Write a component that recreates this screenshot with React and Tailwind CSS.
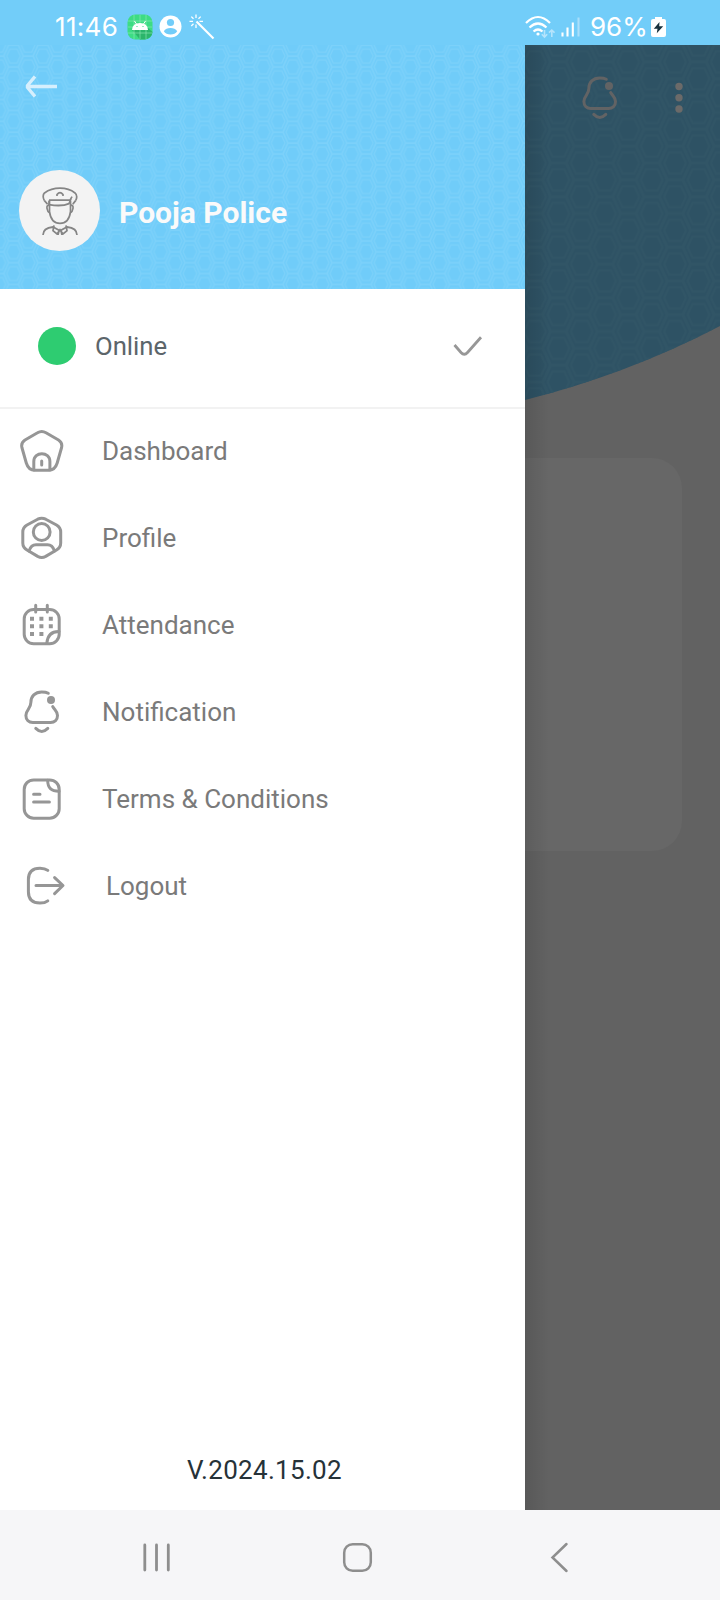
import React from "react";

const menuItems = [
  { label: "Dashboard", icon: HomeIcon },
  { label: "Profile", icon: ProfileIcon },
  { label: "Attendance", icon: CalendarIcon },
  { label: "Notification", icon: BellIcon },
  { label: "Terms & Conditions", icon: TermsIcon },
  { label: "Logout", icon: LogoutIcon, indent: true },
];

function Icon({ children, className = "text-[#969696]" }) {
  return (
    <svg
      className={`h-11 w-11 shrink-0 ${className}`}
      viewBox="0 0 44 44"
      fill="none"
      stroke="currentColor"
      strokeWidth="3"
      strokeLinecap="round"
      strokeLinejoin="round"
    >
      {children}
    </svg>
  );
}

function HomeIcon() {
  return (
    <Icon>
      <path d="M17.500 3.800 5 11Q.8 13.800 1.900 18.500L6.300 34Q8.500 41.300 15 41.300H28.500Q35 41.300 37.200 34L41.600 18.500Q42.700 13.800 38.500 11L26 3.800Q21.700 1.200 17.500 3.800Z" />
      <path d="M13.800 41V32.500C13.800 22.200 29.900 22.200 29.900 32.500V41" />
      <path d="M21.700 32V36" />
    </Icon>
  );
}

function ProfileIcon() {
  return (
    <Icon>
      <path d="M17.700 3.200 7 9Q2.800 11.500 2.800 16V27Q2.800 31.500 7 34L17.700 40.400Q21.700 42.500 25.700 40.400L36.500 34Q40.700 31.500 40.700 27V16Q40.700 11.500 36.500 9L25.700 3.200Q21.700 1.200 17.700 3.200Z" />
      <circle cx="21.7" cy="16" r="8.4" />
      <path d="M9 35Q11 28.8 16 28.8H27.5Q32.5 28.8 34.5 35" />
    </Icon>
  );
}

function CalendarIcon() {
  return (
    <Icon>
      <rect x="4.2" y="6.5" width="35" height="34.3" rx="9.500" />
      <path d="M15.7 2.2V9M27.3 2.2V9" />
      <path d="M39 28.5Q27.8 28.3 26.8 40.4" />
      <g fill="currentColor" stroke="none">
        <path d="M10 13.7h4v4h-4zM19.4 13.7h4v4h-4zM28.8 13.7h4v4h-4z" />
        <path d="M10 21.3h4v4h-4zM19.4 21.3h4v4h-4zM28.8 21.3h4v4h-4z" />
        <path d="M10 29h4v4h-4zM19.4 29h4v4h-4z" />
      </g>
    </Icon>
  );
}

function BellIcon({ className }) {
  return (
    <Icon className={className}>
      <path d="M28.3 3.3Q26 2 21.7 2C15 2 10.9 6.4 10.9 12.3C10.9 19 5.9 19.5 5.9 25.5C5.9 30 8.8 32.4 12.8 32.4H30.6C34.6 32.4 37.5 30 37.5 25.5C37.5 21.3 34.6 20 32.7 16.6" />
      <path d="M15.8 38.4Q21.7 44.5 27.8 38.4" />
      <circle cx="31" cy="10" r="4" fill="currentColor" stroke="none" />
    </Icon>
  );
}

function TermsIcon() {
  return (
    <Icon>
      <rect x="4.2" y="2.9" width="35" height="38.3" rx="9.500" />
      <path d="M27.7 3.2C27.7 10.8 31 14.2 39 14.2" />
      <path d="M13.6 17.2H20M13.6 25H29.4" />
    </Icon>
  );
}

function LogoutIcon() {
  return (
    <Icon>
      <path d="M23.8 6.4Q21 4.2 16 4.2Q4.4 4.2 4.4 15.5V27.8Q4.4 39.1 16 39.1Q21 39.1 23.8 36.9" />
      <path d="M12 21.5H38.5M30.6 13.6 39 21.5 30.6 29.6" />
    </Icon>
  );
}

/* Honeycomb texture, lighter lines over the parent colour */
function HexPattern({ id, x, y, width, height, color }) {
  return (
    <svg className="absolute inset-0 h-full w-full">
      <defs>
        <pattern
          id={id}
          patternUnits="userSpaceOnUse"
          width={width}
          height={height}
          patternTransform={`translate(${x} ${y})`}
          viewBox="0 0 60 44"
          preserveAspectRatio="none"
        >
          <g fill="none" stroke={color}>
            <g strokeWidth="2.500">
              <path d="M16 22 22.500 8H37.500L44 22 37.500 36H22.500Z" />
              <path d="M14 0 7.500 14H-7.500M14 44 7.500 30H-7.500" />
              <path d="M46 0 52.500 14H67.500M46 44 52.500 30H67.500" />
            </g>
            <path d="M0 22H10L20 0H40L50 22H60M10 22 20 44H40L50 22" strokeWidth="3.500" />
          </g>
        </pattern>
      </defs>
      <rect width="100%" height="100%" fill={`url(#${id})`} />
    </svg>
  );
}

function StatusBar() {
  return (
    <header className="flex h-[45px] shrink-0 items-center bg-[#72cdf9] pt-2 pl-[55px] font-['Inter'] text-[26px] text-white">
      <span className="w-[72px] text-[26px] tracking-[0.300px]">11:46</span>
      <svg className="h-[26px] w-[26px]" viewBox="0 0 26 26">
        <rect x=".5" y=".5" width="25" height="25" rx="8" fill="#3ddc84" />
        <path d="M5 16 13 25.500H18Q25 24 25.500 18L21 14Z" fill="#2bb56b" />
        <path d="M7 1v24M13 1v24M19 1v24M1 7h24M1 13h24M1 19h24" stroke="#91edb9" strokeWidth=".6" />
        <path d="M5 16Q5.5 9 13 9T21 16Z" fill="#fff" />
        <path d="m7.5 7 2 3M18.500 7l-2 3" stroke="#fff" />
        <path d="M9.500 12.500h1M15.500 12.500h1" stroke="#3ddc84" strokeWidth="1.200" />
      </svg>
      <svg className="ml-1.5 h-[23px] w-[23px]" viewBox="0 0 23 23">
        <circle cx="11.500" cy="11.500" r="11" fill="#fff" />
        <circle cx="11.500" cy="7.500" r="3.600" fill="#72cdf9" />
        <path d="M4.800 16.300Q7 13 11.500 13T18.200 16.300Q16 19.500 11.500 19.500T4.800 16.300Z" fill="#72cdf9" />
      </svg>
      <svg className="ml-[7px] h-[26px] w-[26px]" viewBox="0 0 26 26" fill="none" stroke="#fff">
        <path d="M7.500 7.500 24.500 24.500" strokeWidth="2.200" />
        <path d="M7 .5V4M7 10.500V14M.5 7.300H4M10.500 7.300H14M2.300 2.600 4.500 4.800M11.700 2.600 9.500 4.800M2.300 12 4.500 9.800" strokeWidth="1.300" />
      </svg>

      <svg className="ml-[310px] h-6 w-[30px]" viewBox="0 0 30 24" fill="none" stroke="#fff">
        <path d="M1 8Q13-4 25 8M4.500 12.500Q13 4.500 21.500 12.500M8.500 16.500Q13 12.500 17.500 16.500" strokeWidth="2.200" />
        <circle cx="13" cy="19" r="1.600" fill="#fff" strokeWidth="0" />
        <g stroke="#b5e4fc" strokeWidth="1.600">
          <path d="M19.500 15v7M16.800 19.300l2.700 2.700 2.700-2.700M26.800 22v-7M24 17.700l2.800-2.700 2.700 2.700" />
        </g>
      </svg>
      <svg className="ml-[6px] h-5 w-[19px]" viewBox="0 0 19 20" fill="none" stroke="#fff" strokeWidth="2.100">
        <path d="M1.500 15.500V19.500M6.500 10.500V19.500M11.800 5.500V19.500" />
        <path d="M17.500.5V19.500" stroke="#a9dffb" />
      </svg>
      <span className="ml-[10px] w-[57px]">96%</span>
      <svg className="ml-[4px] h-5 w-[15px]" viewBox="0 0 15 20">
        <path d="M4 0H11V2H13Q15 2 15 4V18Q15 20 13 20H2Q0 20 0 18V4Q0 2 2 2H4Z" fill="#fff" />
        <path d="M8.500 5 2.800 11.800H6.500L5.800 16.300 12.200 9.300H8.200Z" fill="#17303c" />
      </svg>
    </header>
  );
}

function Avatar() {
  return (
    <div className="flex h-[81px] w-[81px] items-center justify-center rounded-full bg-[#f3f3f3]">
      <svg className="h-[49px] w-[38px]" viewBox="0 0 38 46" preserveAspectRatio="none" fill="none" stroke="#858585" strokeWidth="1.700">
        <path d="M3.200 13.500Q1 9 3.500 6.500Q10 2 19 2T34 6.500Q37 9 34.800 13.500" />
        <path d="M3.200 13.500 6.500 17M34.800 13.500 31.800 17M8 13.300H29L31 10M8 13.500V17.500Q21 19.500 28 16.500L30 12" />
        <path d="M16 9.500V8Q19 4.500 22 8V9.500" />
        <path d="M8.500 14V24Q10 35 19 35T29.500 24V14" />
        <path d="M8 18Q5.500 18 6 21T8.500 25M30 18Q32.500 18 32 21T29.500 25" />
        <path d="M2 46Q2 39.500 12 38.500L19 42 26 38.500Q36 39.500 36 46" />
        <path d="M13 37 12 42 16 45 19 41 22 45 26 42 25 37M18 42 17 46M20 42 21 46" />
      </svg>
    </div>
  );
}

function Drawer() {
  return (
    <aside className="flex w-[525px] shrink-0 flex-col bg-white">
      <div className="relative h-[244px] bg-[#70ccf9]">
        <HexPattern id="hex-light" x={13.5} y={11} width={29.4} height={21.75} color="#7cd1fa" />
        <div className="relative flex h-full flex-col">
          <button className="mt-[30px] ml-[24px] h-6 w-9 text-[#d6effd]">
            <svg className="h-6 w-9" viewBox="0 0 36 24" fill="none" stroke="currentColor" strokeWidth="3.400">
              <path d="M11 1.500 3.500 10.500V12.500L11 21.500M3.500 11.500H33" />
            </svg>
          </button>
          <div className="mt-[71px] flex items-center pl-[19px]">
            <Avatar />
            <h1 className="mt-[3px] ml-[19px] text-[30px] font-bold text-[#fafafa]">Pooja Police</h1>
          </div>
        </div>
      </div>

      {/* Availability */}
      <div className="flex h-[120px] items-center border-b-2 border-[#f2f2f2] pr-[41px] pb-1 pl-[38px]">
        <span className="h-[38px] w-[38px] rounded-full bg-[#2ecc71]" />
        <span className="ml-[19px] flex-1 text-[25.700px] text-[#5c656a]">Online</span>
        <svg className="h-6 w-8" viewBox="0 0 32 24" fill="none" stroke="#979797" strokeWidth="2.800">
          <path d="M2.500 11 9 18.500Q12.300 22 15.500 18.500L29 3.300" />
        </svg>
      </div>

      <nav className="flex flex-1 flex-col gap-[43px] pt-5">
        {menuItems.map(({ label, icon: ItemIcon, indent }) => (
          <a key={label} className={`flex h-11 items-center gap-[38px] ${indent ? "pl-6" : "pl-5"}`}>
            <ItemIcon />
            <span className="text-[26px] whitespace-nowrap text-[#7a7a7a]">{label}</span>
          </a>
        ))}
      </nav>

      <p className="pb-5 pl-1 text-center text-[26px] leading-[39px] tracking-[0.3px] text-[#263238]">
        V.2024.15.02
      </p>
    </aside>
  );
}

/* Home screen, dimmed while the drawer is open */
function DimmedHome() {
  return (
    <main className="relative flex flex-1 flex-col overflow-hidden bg-[#626262]">
      <div className="relative h-[413px] shrink-0">
        <div className="absolute inset-x-0 top-0 h-[356px] bg-[#2e5264] [clip-path:path('M0_0H195V281Q103_329_0_355Z')]">
          <HexPattern id="hex-dark" x={10} y={118} width={46.7} height={33.7} color="#315566" />
        </div>
        <div className="relative flex items-center pt-[31px] pl-[53px]">
          <BellIcon className="text-[#626364]" />
          <svg className="ml-[53px] h-8 w-2" viewBox="0 0 8 32" fill="#6b6a69">
            <circle cx="4" cy="4.500" r="3.700" />
            <circle cx="4" cy="15.700" r="3.700" />
            <circle cx="4" cy="27" r="3.700" />
          </svg>
        </div>
      </div>
      <div className="h-[393px] w-[157px] rounded-r-[30px] bg-[#676767]" />
      <div className="absolute inset-y-0 left-0 w-6 bg-linear-to-r from-black/10 to-transparent" />
    </main>
  );
}

function NavigationBar() {
  return (
    <footer className="flex h-[90px] shrink-0 items-center bg-[#f6f6f8] pt-[5px] pl-[141px]">
      <svg className="h-8 w-8" viewBox="0 0 32 32" stroke="#8e8e8e" strokeWidth="2.800" strokeLinecap="round">
        <path d="M3.800 3V28M15.500 3V28M27.300 3V28" />
      </svg>
      <svg className="ml-[168px] h-8 w-8" viewBox="0 0 32 32" fill="none" stroke="#8e8e8e" strokeWidth="2.500">
        <rect x="3.200" y="2.200" width="26.600" height="26.600" rx="8.500" />
      </svg>
      <svg className="ml-[170px] h-8 w-8" viewBox="0 0 32 32" fill="none" stroke="#8e8e8e" strokeWidth="2.500" strokeLinecap="round">
        <path d="M23.500 2 9.500 15.500 23.500 29" />
      </svg>
    </footer>
  );
}

export default function App() {
  return (
    <div className="flex h-[1600px] w-[720px] flex-col overflow-hidden font-['Roboto',sans-serif]">
      <StatusBar />
      <div className="flex min-h-0 flex-1">
        <Drawer />
        <DimmedHome />
      </div>
      <NavigationBar />
    </div>
  );
}
